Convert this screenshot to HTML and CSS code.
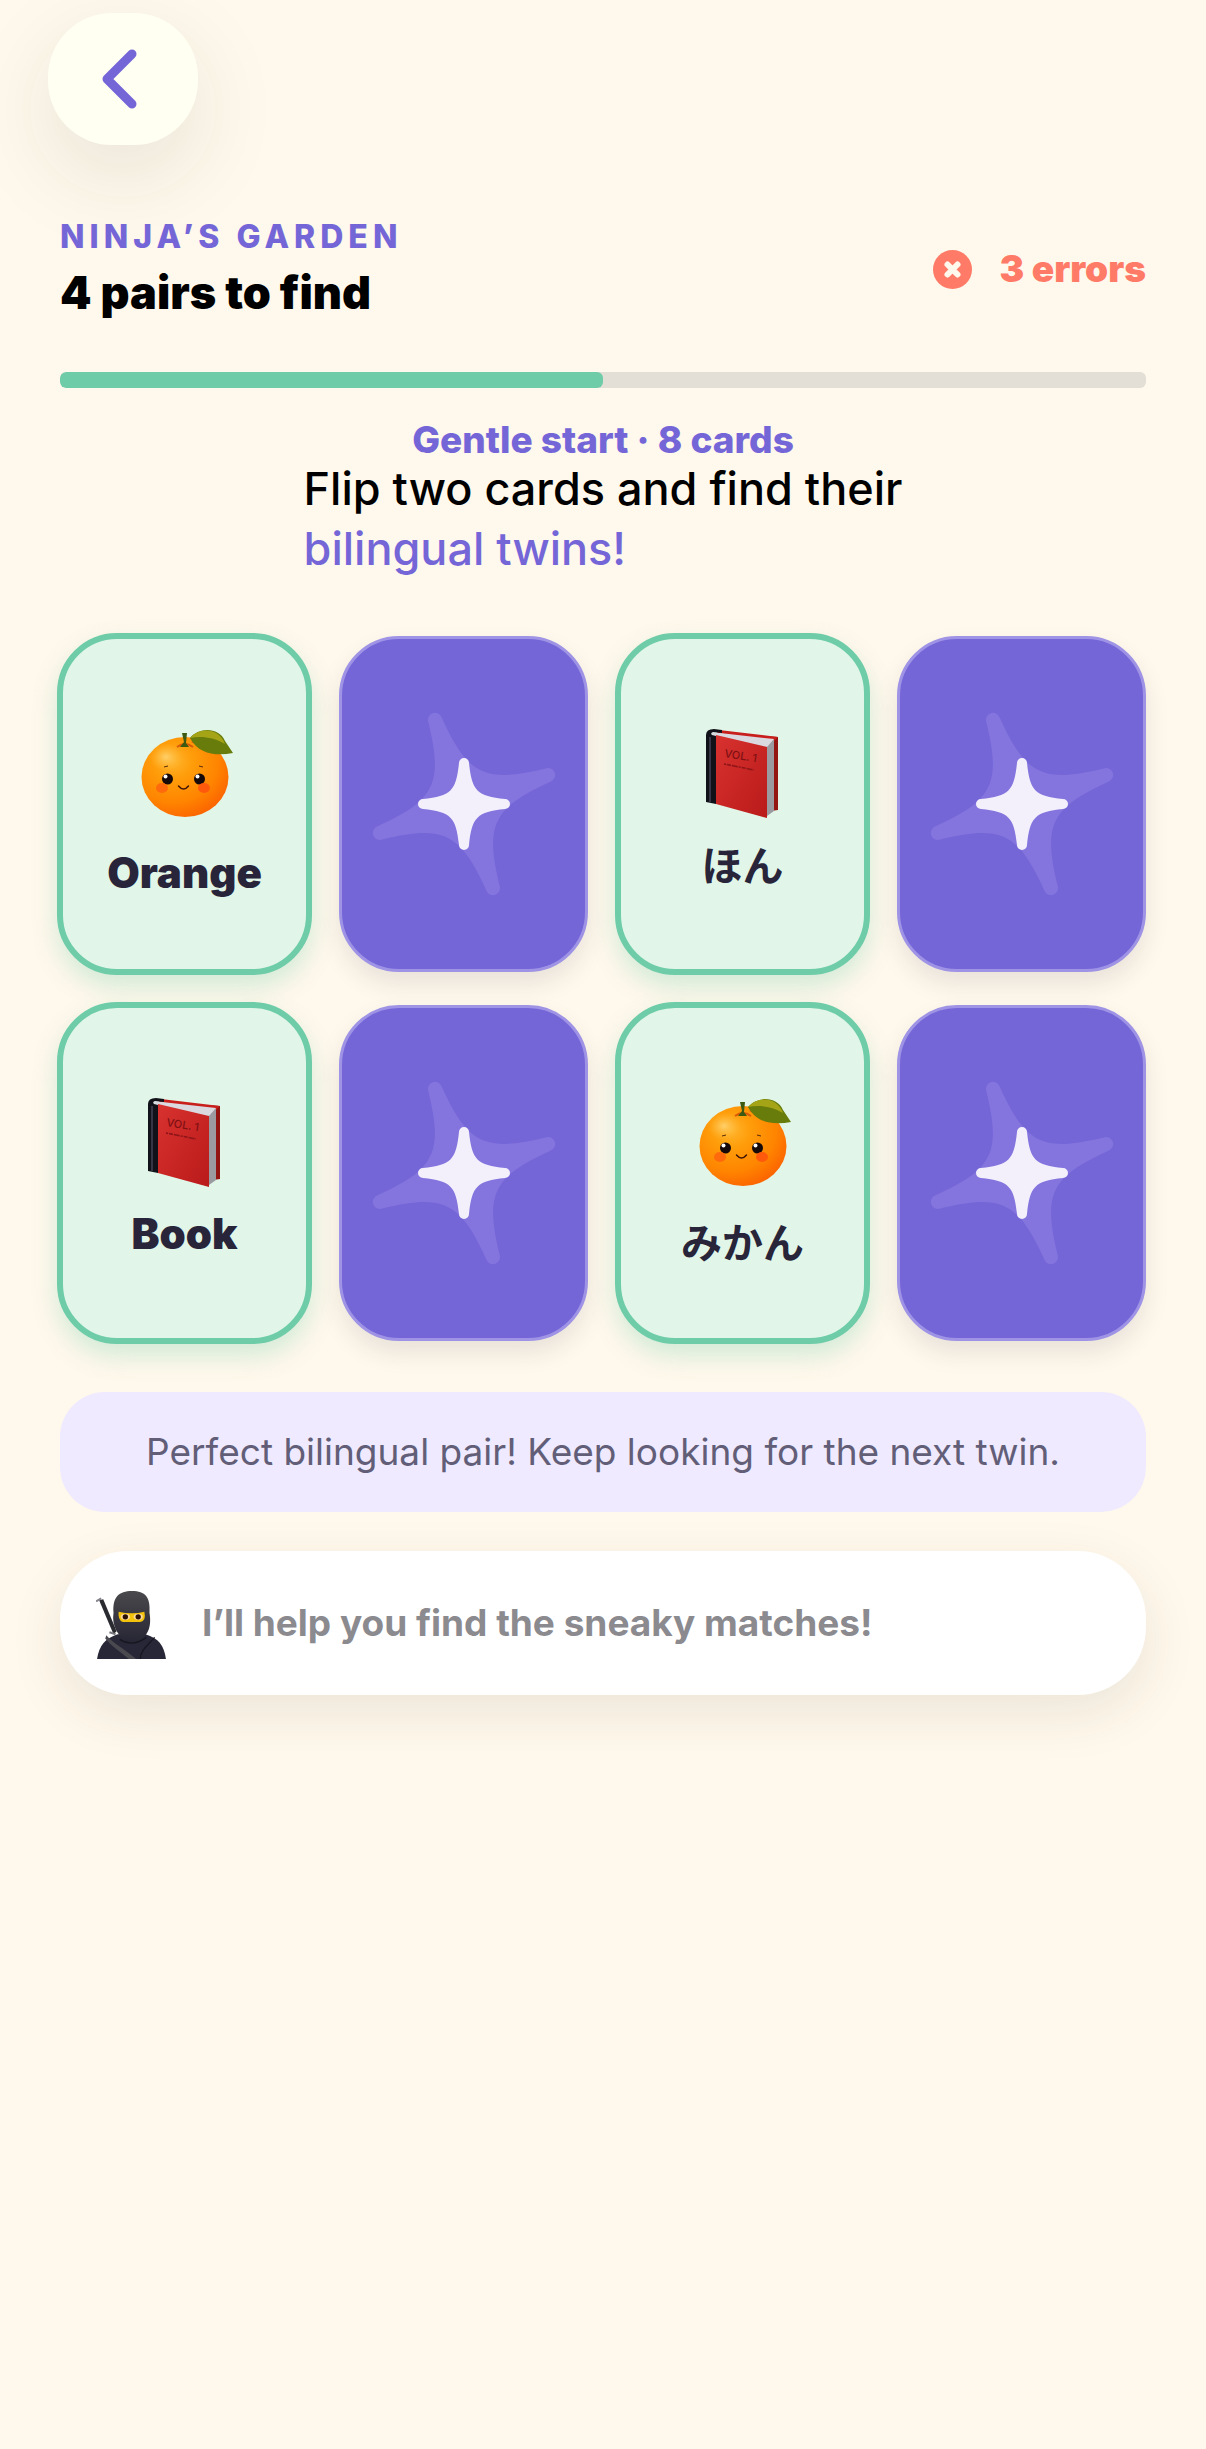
FILE: index.html
```html
<!DOCTYPE html>
<html lang="en">
<head>
    <meta charset="UTF-8">
    <meta name="viewport" content="width=device-width, initial-scale=1.0">
    <title>Ninja’s Garden</title>
    <link rel="stylesheet" href="styles.css">
</head>
<body>
    <!-- Shared drawings -->
    <svg class="sprite" aria-hidden="true">
        <defs>
            <radialGradient id="peel" cx="0.36" cy="0.3" r="0.75">
                <stop offset="0" stop-color="#ffb52e"/>
                <stop offset="0.3" stop-color="#ff9d0a"/>
                <stop offset="0.7" stop-color="#ff8400"/>
                <stop offset="1" stop-color="#fb6300"/>
            </radialGradient>
            <radialGradient id="shine">
                <stop offset="0" stop-color="#ffd06a"/>
                <stop offset="1" stop-color="#ffb52e" stop-opacity="0"/>
            </radialGradient>
            <linearGradient id="cover" x1="0" y1="0" x2="1" y2="1">
                <stop offset="0" stop-color="#d8322f"/>
                <stop offset="1" stop-color="#b91a1a"/>
            </linearGradient>
            <linearGradient id="hood" x1="0" y1="0" x2="0" y2="1">
                <stop offset="0" stop-color="#4a494c"/>
                <stop offset="1" stop-color="#252433"/>
            </linearGradient>
        </defs>

        <symbol id="orange" viewBox="-2 -1 96 96">
            <ellipse cx="46" cy="48" rx="43.500" ry="40" fill="url(#peel)"/>
            <ellipse cx="27" cy="28" rx="17" ry="14" fill="url(#shine)"/>
            <path d="M52 13C59 15 69 26 79 24C75 19 69 14 60 11Z" fill="#ef3f1d"/>
            <path d="M38 18Q46 12 54 18" fill="none" stroke="#d95a08" stroke-width="2"/>
            <path d="M43 4L48 4L47 14L50 18L41 18L45 13Z" fill="#3e5a12"/>
            <path d="M51 9C60-2 80-2 86 12L94 24C78 27 60 26 51 9Z" fill="#687c0b"/>
            <path d="M51 9C60-2 80-2 86 15C74 8 62 7 51 9Z" fill="#a5a316"/>
            <circle cx="28.500" cy="50" r="5.500" fill="#15090a"/>
            <circle cx="60.500" cy="50" r="5.500" fill="#15090a"/>
            <circle cx="26.500" cy="47.500" r="2" fill="#fff"/>
            <circle cx="58.500" cy="47.500" r="2" fill="#fff"/>
            <path d="M25 38L29 37M60 37L64 38" stroke="#5b2b08" stroke-width="1"/>
            <ellipse cx="23" cy="59" rx="6" ry="5" fill="#ff6a0c"/>
            <ellipse cx="65" cy="59" rx="6" ry="5" fill="#ff5a0c"/>
            <path d="M39.500 57Q44.500 63 49.500 57" fill="none" stroke="#3a1206" stroke-width="1.400" stroke-linecap="round"/>
        </symbol>

        <symbol id="book" viewBox="0 0 96 96">
            <path d="M70 8L83 9L83 82L76 83Z" fill="#941411"/>
            <path d="M24 2L83 9L79 13L22 5Z" fill="#c91f1c"/>
            <path d="M71 17L79 11L79 83L72 88Z" fill="#9b9aa0"/>
            <path d="M16 4L79 11L72 19L18 8Z" fill="#dad9e0"/>
            <path d="M21 7L72 19L72 90L21 76Z" fill="url(#cover)"/>
            <path d="M11 7Q11 1 19 1L27 2L27 5L18 4Q15 5 17 7L21 8L21 76L11 74Z" fill="#111119"/>
            <path d="M15 9L15 74" stroke="#5d5b72" stroke-width="1"/>
            <path d="M29 36L59 42" stroke="#8d1518" stroke-width="1.600" stroke-dasharray="2 1 4 1 6 1"/>
        </symbol>

        <symbol id="ninja" viewBox="0 -3 68 70">
            <path d="M3 10L7 9L20 40L17 43Z" fill="#2a2a31"/>
            <path d="M0 11L5 8" stroke="#85858c" stroke-width="2"/>
            <path d="M13 41L19 43" stroke="#77777f" stroke-width="2"/>
            <path d="M1 67C3 54 9 47 21 43L48 43C61 47 66 54 68 67Z" fill="#282738"/>
            <path d="M17 22C16 7 22 1 35 1C48 1 53 7 52 22C54 35 52 46 35 53C21 46 15 35 17 22Z" fill="url(#hood)"/>
            <path d="M10 44C17 52 27 57 39 67L32 67C24 60 13 53 9 47Z" fill="#4a4950"/>
            <path d="M57 46C50 54 43 59 43 67M23 48Q35 56 49 46" fill="none" stroke="#171722" stroke-width="1.400"/>
            <path d="M22 21Q35 24 47 21Q49 30 43 31L26 31Q21 29 22 21Z" fill="#f2c20c"/>
            <ellipse cx="28.500" cy="26" rx="4.500" ry="3" fill="#fbd9a0"/>
            <ellipse cx="41" cy="26" rx="4.500" ry="3" fill="#fbd9a0"/>
            <circle cx="28.500" cy="26" r="2.600" fill="#2a1003"/>
            <circle cx="41" cy="26" r="2.600" fill="#2a1003"/>
        </symbol>

        <symbol id="sparkle" viewBox="-96 -96 192 192">
            <path class="sparkle-back" transform="rotate(-19)" d="M-7-89A7 7 0 0 1 7-89C13-26 26-13 89-7A7 7 0 0 1 89 7C26 13 13 26 7 89A7 7 0 0 1-7 89C-13 26-26 13-89 7A7 7 0 0 1-89-7C-26-13-13-26-7-89Z"/>
            <path class="sparkle-front" d="M-5-41A5 5 0 0 1 5-41C8-13 13-8 41-5A5 5 0 0 1 41 5C13 8 8 13 5 41A5 5 0 0 1-5 41C-8 13-13 8-41 5A5 5 0 0 1-41-5C-13-8-8-13-5-41Z"/>
        </symbol>
    </svg>

    <main class="game">
        <button type="button" class="back-btn" aria-label="Back">
            <svg width="36" height="60" viewBox="0 0 36 60" aria-hidden="true">
                <path d="M31 5L6 30L31 55" fill="none" stroke="currentColor" stroke-width="9" stroke-linecap="round" stroke-linejoin="round"/>
            </svg>
        </button>

        <header class="header">
            <div>
                <p class="eyebrow">NINJA’S GARDEN</p>
                <h1>4 pairs to find</h1>
            </div>
            <p class="errors">
                <svg width="39" height="39" viewBox="0 0 39 39" aria-hidden="true">
                    <circle cx="19.500" cy="19.500" r="19.500" fill="currentColor"/>
                    <path d="M14.500 14.500L24.500 24.500M24.500 14.500L14.500 24.500" stroke="#fff8ec" stroke-width="6" stroke-linecap="round"/>
                </svg>
                3 errors
            </p>
        </header>

        <div class="progress" role="progressbar" aria-label="Pairs found" aria-valuenow="50" aria-valuemin="0" aria-valuemax="100">
            <div class="progress-fill" style="width: 50%"></div>
        </div>

        <p class="level">Gentle start · 8 cards</p>
        <p class="hint">Flip two cards and find their<br><span>bilingual twins!</span></p>

        <div class="board">
            <button type="button" class="card matched fruit">
                <svg class="card-art" aria-hidden="true"><use href="#orange"/></svg>
                <span>Orange</span>
            </button>
            <button type="button" class="card hidden" aria-label="Hidden card">
                <svg class="sparkle" aria-hidden="true"><use href="#sparkle"/></svg>
            </button>
            <button type="button" class="card matched">
                <svg class="card-art" viewBox="0 0 96 96" aria-hidden="true">
                    <use href="#book"/>
                    <text class="book-title" x="29" y="29" transform="rotate(9 29 29)">VOL. 1</text>
                </svg>
                <span lang="ja">ほん</span>
            </button>
            <button type="button" class="card hidden" aria-label="Hidden card">
                <svg class="sparkle" aria-hidden="true"><use href="#sparkle"/></svg>
            </button>
            <button type="button" class="card matched">
                <svg class="card-art" viewBox="0 0 96 96" aria-hidden="true">
                    <use href="#book"/>
                    <text class="book-title" x="29" y="29" transform="rotate(9 29 29)">VOL. 1</text>
                </svg>
                <span>Book</span>
            </button>
            <button type="button" class="card hidden" aria-label="Hidden card">
                <svg class="sparkle" aria-hidden="true"><use href="#sparkle"/></svg>
            </button>
            <button type="button" class="card matched fruit">
                <svg class="card-art" aria-hidden="true"><use href="#orange"/></svg>
                <span lang="ja">みかん</span>
            </button>
            <button type="button" class="card hidden" aria-label="Hidden card">
                <svg class="sparkle" aria-hidden="true"><use href="#sparkle"/></svg>
            </button>
        </div>

        <p class="feedback">Perfect bilingual pair! Keep looking for the next twin.</p>

        <div class="helper">
            <svg class="ninja" aria-hidden="true"><use href="#ninja"/></svg>
            <p>I’ll help you find the sneaky matches!</p>
        </div>
    </main>
</body>
</html>
```

FILE: styles.css
```css
* {
    margin: 0;
    padding: 0;
    box-sizing: border-box;
}

body {
    font-family: Inter, "Noto Sans CJK JP", sans-serif;
    background: #fff8ec;
    color: #000;
    min-height: 100vh;
}

button {
    font: inherit;
    border: none;
    cursor: pointer;
}

.sprite {
    position: absolute;
    width: 0;
    height: 0;
}

.game {
    display: flex;
    flex-direction: column;
    padding: 13px 60px 60px;
}

.back-btn {
    display: flex;
    align-items: center;
    justify-content: center;
    width: 150px;
    height: 132px;
    margin-left: -12px;
    padding-right: 8px;
    border-radius: 64px;
    background: #fffff2;
    color: #7566d8;
    box-shadow: 0 30px 90px rgba(40, 50, 40, 0.1);
}

.header {
    display: flex;
    align-items: center;
    justify-content: space-between;
    margin-top: 72px;
}

.eyebrow {
    font-size: 32px;
    line-height: 40px;
    font-weight: 800;
    letter-spacing: 5px;
    color: #7566d8;
}

h1 {
    margin-top: 8px;
    font-size: 45px;
    line-height: 56px;
    font-weight: 900;
}

.errors {
    display: flex;
    align-items: center;
    gap: 28px;
    font-size: 37px;
    line-height: 44px;
    font-weight: 900;
    color: #ff7b68;
}

.progress {
    height: 16px;
    margin-top: 51px;
    border-radius: 6px;
    background: #e3ded6;
    overflow: hidden;
}

.progress-fill {
    height: 100%;
    border-radius: 6px;
    background: #6ecca8;
}

.level {
    margin-top: 33px;
    font-size: 37px;
    line-height: 38px;
    font-weight: 800;
    text-align: center;
    color: #7566d8;
}

.hint {
    align-self: center;
    font-size: 45px;
    line-height: 60px;
    font-weight: 500;
}

.hint span {
    color: #7566d8;
}

.board {
    display: grid;
    grid-template-columns: repeat(4, 1fr);
    grid-auto-rows: minmax(336px, auto);
    gap: 33px 30px;
    margin-top: 57px;
}

.card {
    display: flex;
    flex-direction: column;
    align-items: center;
    border-radius: 60px;
}

.matched {
    gap: 15px;
    margin: -3px;
    padding-top: 89px;
    border: 6px solid #6ecca8;
    background: #e1f6e8;
    color: #28253a;
    font-size: 42px;
    line-height: 52px;
    font-weight: 900;
    box-shadow: 0 12px 24px rgba(110, 204, 168, 0.3);
}

.fruit {
    gap: 23px;
}

.card-art {
    width: 96px;
    height: 96px;
}

.matched [lang="ja"] {
    font-family: "Noto Sans CJK JP", sans-serif;
    font-size: 41px;
    line-height: 48px;
    font-weight: 700;
}

.book-title {
    font-size: 11px;
    line-height: 12px;
    font-weight: 500;
    fill: #7f1013;
}

.hidden {
    justify-content: center;
    border: 3px solid #9e93e5;
    background: #7566d8;
    box-shadow: 0 12px 24px rgba(40, 37, 58, 0.1);
}

.sparkle {
    width: 192px;
    height: 192px;
}

.sparkle-back {
    fill: #8475de;
}

.sparkle-front {
    fill: #f3f0fc;
}

.feedback {
    margin-top: 51px;
    padding: 38px 48px;
    border-radius: 45px;
    background: #efeaff;
    color: #625e78;
    font-size: 37px;
    line-height: 44px;
    text-align: center;
}

.helper {
    display: flex;
    align-items: center;
    gap: 36px;
    margin-top: 39px;
    padding: 36px;
    border-radius: 68px;
    background: #fff;
    color: #8b8a8f;
    font-size: 37px;
    line-height: 72px;
    font-weight: 700;
    box-shadow: 0 18px 54px rgba(60, 60, 40, 0.1);
}

.ninja {
    width: 70px;
    height: 72px;
}
```
